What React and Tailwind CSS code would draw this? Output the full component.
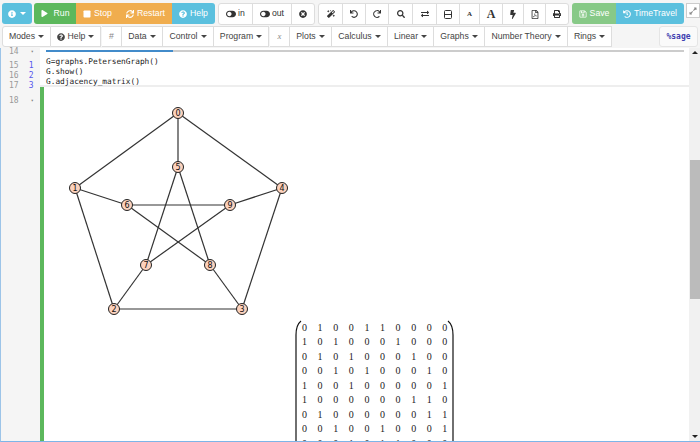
import {
  FaInfoCircle, FaPlay, FaStop, FaSync, FaQuestionCircle, FaToggleOn, FaTimesCircle, FaMagic, FaUndo, FaRedo,
  FaSearch, FaExchangeAlt, FaBolt, FaRegFilePdf, FaPrint, FaRegSave, FaHistory, FaExpandAlt,
} from 'react-icons/fa';

const Caret = () => (
  <span className="ml-[3px] inline-block h-0 w-0 border-x-[3px] border-t-[3px] border-x-transparent border-t-current align-middle" />
);

const nodes = [
  [178, 113], [75, 188], [114, 309], [242, 309], [282, 188],
  [178, 167], [127, 205], [146, 265], [210, 265], [230, 205],
];

const edges = [
  [0, 1], [1, 2], [2, 3], [3, 4], [4, 0], [0, 5], [1, 6], [2, 7], [3, 8], [4, 9],
  [5, 7], [7, 9], [9, 6], [6, 8], [8, 5],
];

const matrix = [
  '0100110000', '1010001000', '0101000100', '0010100010', '1001000001',
  '1000000110', '0100000011', '0010010001', '0001011000',
];

const row1Tools = [
  { icon: FaMagic, w: 'w-[24px]' },
  { icon: FaUndo, w: 'w-[23px]' },
  { icon: FaRedo, w: 'w-[23px]' },
  { icon: FaSearch, w: 'w-[24px]' },
  { icon: FaExchangeAlt, w: 'w-[24px]' },
];

const row2 = [
  { label: 'Modes', w: 'w-[49px]', caret: true },
  { label: 'Help', w: 'w-[50px]', caret: true, help: true },
  { label: '#', w: 'w-[20px]', dim: true, gap: true },
  { label: 'Data', w: 'w-[41px]', caret: true },
  { label: 'Control', w: 'w-[51px]', caret: true },
  { label: 'Program', w: 'w-[55px]', caret: true },
  { label: 'x', w: 'w-[20px]', dim: true, gap: true, italic: true },
  { label: 'Plots', w: 'w-[42px]', caret: true },
  { label: 'Calculus', w: 'w-[56px]', caret: true },
  { label: 'Linear', w: 'w-[46px]', caret: true },
  { label: 'Graphs', w: 'w-[51px]', caret: true },
  { label: 'Number Theory', w: 'w-[83px]', caret: true },
  { label: 'Rings', w: 'w-[44px]', caret: true },
];

function ToolBtn({ w, children }) {
  return (
    <div className={`flex h-[20px] ${w} items-center justify-center whitespace-nowrap border-r border-[#dddddd] text-[#333333] last:border-r-0`}>
      {children}
    </div>
  );
}

function ColorBtn({ w, bg, children }) {
  return (
    <div className={`flex h-[21px] ${w} items-center justify-center gap-[3px] whitespace-nowrap ${bg} text-[8.7px] text-white`}>
      {children}
    </div>
  );
}

export default function App() {
  return (
    <div className="flex h-[442px] w-[700px] flex-col overflow-hidden bg-[#f5f5f5] font-['Liberation_Sans',sans-serif]">
      {/* Top button row */}
      <div className="flex h-[26px] shrink-0 items-start pl-[2px] pt-[3px]">
        <div className="flex h-[21px] w-[30px] items-center justify-center gap-[1px] rounded-[3px] bg-[#5bc0de] text-white">
          <FaInfoCircle className="h-[8px] w-[8px]" />
          <Caret />
        </div>
        <div className="ml-[2px] flex overflow-hidden rounded-[3px]">
          <ColorBtn w="w-[42px]" bg="bg-[#5cb85c]"><FaPlay className="mr-[3px] h-[7px] w-[7px]" />Run</ColorBtn>
          <ColorBtn w="w-[43px]" bg="bg-[#f0ad4e]"><FaStop className="h-[8px] w-[8px]" />Stop</ColorBtn>
          <ColorBtn w="w-[53px]" bg="bg-[#f0ad4e]"><FaSync className="h-[8px] w-[8px]" />Restart</ColorBtn>
          <ColorBtn w="w-[43px]" bg="bg-[#5bc0de]"><FaQuestionCircle className="h-[8px] w-[8px]" />Help</ColorBtn>
        </div>
        <div className="ml-[3px] flex rounded-[3px] border border-[#dddddd] bg-white text-[8.7px]">
          <ToolBtn w="w-[34px]"><FaToggleOn className="mr-[2px] h-[10px] w-[10px] -scale-x-100" />in</ToolBtn>
          <ToolBtn w="w-[39px]"><FaToggleOn className="mr-[2px] h-[10px] w-[10px] -scale-x-100" />out</ToolBtn>
          <ToolBtn w="w-[22px]"><FaTimesCircle className="h-[8px] w-[8px]" /></ToolBtn>
        </div>
        <div className="ml-[3px] flex rounded-[3px] border border-[#dddddd] bg-white">
          {row1Tools.map(({ icon: Icon, w }, i) => (
            <ToolBtn key={i} w={w}><Icon className="h-[8px] w-[8px]" /></ToolBtn>
          ))}
          <ToolBtn w="w-[23px]">
            <svg width="8" height="9" viewBox="0 0 8 9" fill="none" stroke="#333" strokeWidth="1">
              <rect x="0.5" y="0.5" width="7" height="8" rx="1" />
              <path d="M0.5 4.5h7" />
            </svg>
          </ToolBtn>
          <ToolBtn w="w-[20px]"><span className="font-['Liberation_Serif',serif] text-[7px] font-bold">A</span></ToolBtn>
          <ToolBtn w="w-[23px]"><span className="font-['Liberation_Serif',serif] text-[12px] font-bold">A</span></ToolBtn>
          <ToolBtn w="w-[21px]"><FaBolt className="h-[9px] w-[6px]" /></ToolBtn>
          <ToolBtn w="w-[22px]"><FaRegFilePdf className="h-[9px] w-[8px]" /></ToolBtn>
          <ToolBtn w="w-[22px]"><FaPrint className="h-[8px] w-[8px]" /></ToolBtn>
        </div>
        <div className="ml-[3px] flex overflow-hidden rounded-[3px]">
          <ColorBtn w="w-[44px]" bg="bg-[#87c987]"><FaRegSave className="h-[8px] w-[8px]" />Save</ColorBtn>
          <ColorBtn w="w-[68px]" bg="bg-[#5bc0de]"><FaHistory className="h-[8px] w-[8px]" />TimeTravel</ColorBtn>
        </div>
        <div className="ml-[2px] flex h-[15px] w-[14px] items-center justify-center border border-[#cccccc] bg-white text-[#888888]">
          <FaExpandAlt className="h-[8px] w-[8px]" />
        </div>
      </div>

      {/* Menu row */}
      <div className="flex h-[22px] shrink-0 items-start pl-[2px]">
        {row2.map((b) => (
          <div
            key={b.label}
            className={`flex h-[21px] ${b.w} items-center justify-center whitespace-nowrap border border-l-0 border-[#dddddd] bg-white text-[8.7px] first:rounded-l-[3px] first:border-l ${b.gap ? 'ml-[1px]' : ''} ${b.dim ? 'text-[#888888]' : 'text-[#444444]'}`}
          >
            {b.help && <FaQuestionCircle className="mr-[3px] h-[8px] w-[8px]" />}
            <span className={b.italic ? "font-['Liberation_Serif',serif] italic" : ''}>{b.label}</span>
            {b.caret && <Caret />}
          </div>
        ))}
        <div className="ml-auto mr-[2px] flex h-[21px] w-[39px] items-center justify-center rounded-[3px] border border-[#e5e5e5] bg-[#fafafa] font-['DejaVu_Sans_Mono',monospace] text-[8px] font-bold text-[#4040b0]">
          %sage
        </div>
      </div>

      {/* Editor */}
      <div className="flex min-h-0 flex-1 border-b border-l border-b-[#7db5e8] border-l-[#9cc4e8]">
        <div className="w-[39px] shrink-0 bg-[#f5f5f5] font-['DejaVu_Sans_Mono',monospace] text-[8px] text-[#999999]">
          <div className="flex h-[8px] items-center pl-[8px]">14<span className="ml-[12px] text-[5px] text-[#777777]">▾</span></div>
          <div className="mt-[5px] flex h-[10px] items-center pl-[8px]">15<span className="ml-[10px] text-[#5555ee]">1</span></div>
          <div className="flex h-[10px] items-center pl-[8px]">16<span className="ml-[10px] text-[#5555ee]">2</span></div>
          <div className="flex h-[10px] items-center pl-[8px]">17<span className="ml-[10px] text-[#5555ee]">3</span></div>
          <div className="mt-[5px] flex h-[10px] items-center pl-[8px]">18<span className="ml-[12px] text-[5px] text-[#777777]">▾</span></div>
        </div>
        <div className="flex min-w-0 flex-1 flex-col">
          <div className="h-[39px] shrink-0 border-b-2 border-[#eeeeee] bg-white pl-[6px] pt-[2px]">
            <div className="flex h-[2px] w-[638px] bg-[#cccccc]">
              <div className="h-full w-[127px] bg-[#428bca]" />
            </div>
            <div className="mt-[5px] font-['DejaVu_Sans_Mono',monospace] text-[7.8px] leading-[10px] text-[#222222]">
              <div>G=graphs.PetersenGraph()</div>
              <div>G.show()</div>
              <div>G.adjacency_matrix()</div>
            </div>
          </div>
          <div className="min-h-0 flex-1 overflow-hidden border-l-[4px] border-[#5cb85c] bg-white">
            <svg width="300" height="233" viewBox="0 87 300 233" className="block" fill="none">
              {edges.map(([a, b]) => (
                <line key={`${a}-${b}`} x1={nodes[a][0] - 44} y1={nodes[a][1]} x2={nodes[b][0] - 44} y2={nodes[b][1]} stroke="#333333" strokeWidth="1.2" />
              ))}
              {nodes.map(([x, y], i) => (
                <g key={i}>
                  <circle cx={x - 44} cy={y} r="5.5" fill="#fcd2bd" stroke="#222222" strokeWidth="1" />
                  <text x={x - 44} y={y + 3} textAnchor="middle" fontSize="8" fill="#111111" fontFamily="DejaVu Sans">{i}</text>
                </g>
              ))}
            </svg>
            <div className="relative ml-[250px] h-[122px] w-[160px] overflow-hidden pl-[8px] font-['Liberation_Serif',serif] text-[10px] text-[#222222]">
              <svg width="160" height="122" viewBox="0 0 160 122" className="absolute left-0 top-0" fill="none" stroke="#111111">
                <path d="M7 1Q2 5 2 15V122" strokeWidth="1.2" />
                <path d="M154 1Q159 5 159 15V122" strokeWidth="1.2" />
              </svg>
              {matrix.map((row, i) => (
                <div key={i} className="flex h-[14.5px] items-center">
                  {row.split('').map((c, j) => (
                    <span key={j} className="w-[15.6px] shrink-0">{c}</span>
                  ))}
                </div>
              ))}
            </div>
          </div>
        </div>
        {/* Scrollbar */}
        <div className="flex w-[11px] shrink-0 flex-col items-center bg-[#f1f1f1] pt-[3px] pb-[3px]">
          <span className="h-0 w-0 border-x-[3px] border-b-[3px] border-x-transparent border-b-[#222222]" />
          <div className="mt-[106px] h-[139px] w-[10px] bg-[#bbbbbb]" />
          <span className="mt-auto h-0 w-0 border-x-[3px] border-t-[3px] border-x-transparent border-t-[#222222]" />
        </div>
      </div>
    </div>
  );
}
